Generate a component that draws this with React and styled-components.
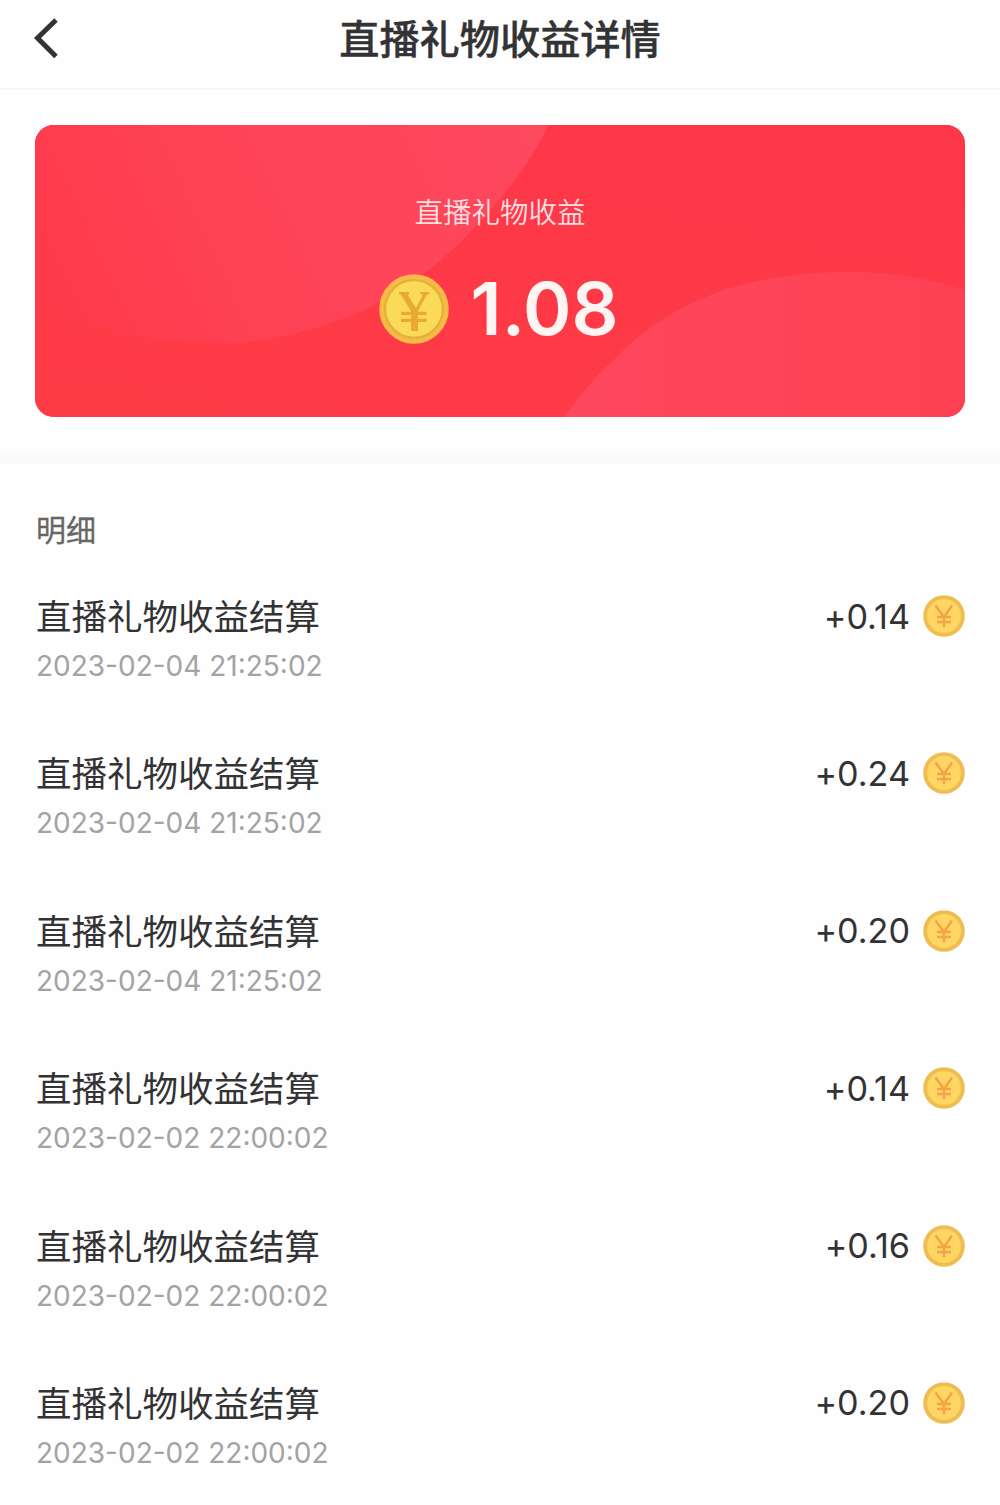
import React from "react";
import styled, { createGlobalStyle } from "styled-components";

const GlobalStyle = createGlobalStyle`
  *, *::before, *::after { box-sizing: border-box; }
  body {
    margin: 0;
    background: #fefefe;
    color: #333335;
    font-family: Inter, "Noto Sans CJK SC", sans-serif;
  }
`;

const Page = styled.main`
  width: 1000px;
  height: 1505px;
  overflow: hidden;
  background: #fefefe;
`;

const Header = styled.header`
  display: grid;
  grid-template-columns: 100px 1fr 100px;
  align-items: center;
  height: 90px;
  padding-bottom: 10px;
  border-bottom: 2px solid #f6f6f6;
`;

const BackButton = styled.button`
  display: flex;
  width: 34px;
  height: 48px;
  margin: 0 0 2px 30px;
  padding: 0;
  border: 0;
  background: none;
`;

const Title = styled.h1`
  margin: 0;
  padding-top: 2px;
  text-align: center;
  font-size: 40.2px;
  font-weight: 500;
  line-height: 60px;
  white-space: nowrap;
  -webkit-text-stroke: 0.4px currentColor;
`;

const Card = styled.section`
  display: grid;
  width: 930px;
  height: 292px;
  margin: 35px 35px 0;
  border-radius: 19px;
  overflow: hidden;
  background: #fe3748;
  > * { grid-area: 1 / 1; }
`;

const CardContent = styled.div`
  display: flex;
  flex-direction: column;
  align-items: center;
  padding-top: 67px;
  isolation: isolate;
`;

const CardLabel = styled.div`
  color: #ffdfe0;
  font-size: 28.5px;
  font-weight: 350;
  line-height: 42px;
`;

const Balance = styled.div`
  display: flex;
  align-items: center;
  gap: 22px;
  height: 72px;
  margin-top: 39px;
  padding-right: 3px;
`;

const BalanceValue = styled.span`
  color: #fff5f3;
  font-size: 73.4px;
  font-weight: 600;
  line-height: 72px;
`;

const Divider = styled.div`
  height: 12px;
  margin-top: 35px;
  background: #fafafa;
`;

const Details = styled.section`
  padding: 44px 35px 0 36px;
`;

const Heading = styled.h2`
  margin: 0;
  color: #666;
  font-size: 30px;
  font-weight: 400;
  line-height: 44px;
  -webkit-text-stroke: 0.3px currentColor;
`;

const List = styled.ul`
  margin: 38px 0 0;
  padding: 0;
  list-style: none;
`;

const Item = styled.li`
  display: flex;
  justify-content: space-between;
  align-items: flex-start;
  height: 157.4px;
`;

const ItemName = styled.div`
  padding-top: 2px;
  font-size: 35.5px;
  line-height: 52px;
`;

const Time = styled.time`
  display: block;
  margin-top: 2px;
  color: #a3a3a3;
  font-size: 28px;
  line-height: 40px;
`;

const Amount = styled.div`
  display: flex;
  align-items: center;
  gap: 13px;
  height: 52px;
  font-size: 34.2px;
  font-feature-settings: "calt" 0;
`;

const CoinSvg = styled.svg`
  display: block;
  flex: none;
  width: ${(p) => p.$size}px;
  height: ${(p) => p.$size}px;
`;

function BigCoin() {
  return (
    <CoinSvg $size={70} viewBox="0 0 70 70" aria-hidden="true">
      <circle cx="35" cy="35" r="34.8" fill="#f9bb45" />
      <circle cx="35" cy="35" r="29" fill="#fbda58" stroke="#e5b33b" strokeWidth="2.6" />
      <path d="M20 18h10v2.5h-1.5L37 34l7-13.5h-2.5V18H50v2.5h-2.2L39 37v20h-7V37L21.8 20.5H20zM22 37.8h25.5v3.2H22zM22 44.8h25.5V48H22z" fill="#eaa936" />
    </CoinSvg>
  );
}

function SmallCoin() {
  return (
    <CoinSvg $size={42} viewBox="0 0 42 42" aria-hidden="true">
      <circle cx="21" cy="21" r="20.8" fill="#efbc50" />
      <circle cx="21" cy="21" r="17" fill="#ffd563" />
      <path d="M12.5 10.5 21 22l8-11.5M21 21.5v10.8M14 22h14M14 27h14" fill="none" stroke="#f1a548" strokeWidth="2.5" />
    </CoinSvg>
  );
}

function CardArt() {
  return (
    <svg width="930" height="292" viewBox="0 0 930 292" aria-hidden="true">
      <defs>
        <linearGradient id="upper" x1="0" y1="0.4" x2="1" y2="0.2">
          <stop offset="0" stopColor="#fe3b4b" />
          <stop offset="0.4" stopColor="#fe4357" />
          <stop offset="1" stopColor="#fe485e" />
        </linearGradient>
        <linearGradient id="lower" x1="0" y1="0.5" x2="1" y2="0.5">
          <stop offset="0" stopColor="#fe485e" />
          <stop offset="1" stopColor="#fe4053" />
        </linearGradient>
        <linearGradient id="base" x1="0" y1="1" x2="0.6" y2="0">
          <stop offset="0" stopColor="#fe3c46" />
          <stop offset="1" stopColor="#fe3748" />
        </linearGradient>
      </defs>
      <path d="M0 0h930v292H0z" fill="url(#base)" />
      <path d="M0 0h514C502 24 486 49 465 74 444 99 421 123 396 143 354 177 310 196 265 207 238 215 210 218 185 218 120 218 53 204 0 185z" fill="url(#upper)" />
      <path d="M529 292C546 270 560 251 579 235 603 209 632 189 666 174 710 154 765 147 816 147c40 0 77 6 114 18v127z" fill="url(#lower)" />
    </svg>
  );
}

const entries = [
  ["2023-02-04 21:25:02", "+0.14"],
  ["2023-02-04 21:25:02", "+0.24"],
  ["2023-02-04 21:25:02", "+0.20"],
  ["2023-02-02 22:00:02", "+0.14"],
  ["2023-02-02 22:00:02", "+0.16"],
  ["2023-02-02 22:00:02", "+0.20"],
];

export default function App() {
  return (
    <>
      <GlobalStyle />
      <Page>
        <Header>
          <BackButton aria-label="返回">
            <svg width="34" height="48" viewBox="0 0 34 48" fill="none" aria-hidden="true">
              <path d="M26 6 7.5 24 26 42.5" stroke="#333335" strokeWidth="5" />
            </svg>
          </BackButton>
          <Title>直播礼物收益详情</Title>
        </Header>
        <Card>
          <CardArt />
          <CardContent>
            <CardLabel>直播礼物收益</CardLabel>
            <Balance>
              <BigCoin />
              <BalanceValue>1.08</BalanceValue>
            </Balance>
          </CardContent>
        </Card>
        <Divider />
        <Details>
          <Heading>明细</Heading>
          <List>
            {entries.map(([time, amount], index) => (
              <Item key={index}>
                <div>
                  <ItemName>直播礼物收益结算</ItemName>
                  <Time>{time}</Time>
                </div>
                <Amount>
                  <span>{amount}</span>
                  <SmallCoin />
                </Amount>
              </Item>
            ))}
          </List>
        </Details>
      </Page>
    </>
  );
}
